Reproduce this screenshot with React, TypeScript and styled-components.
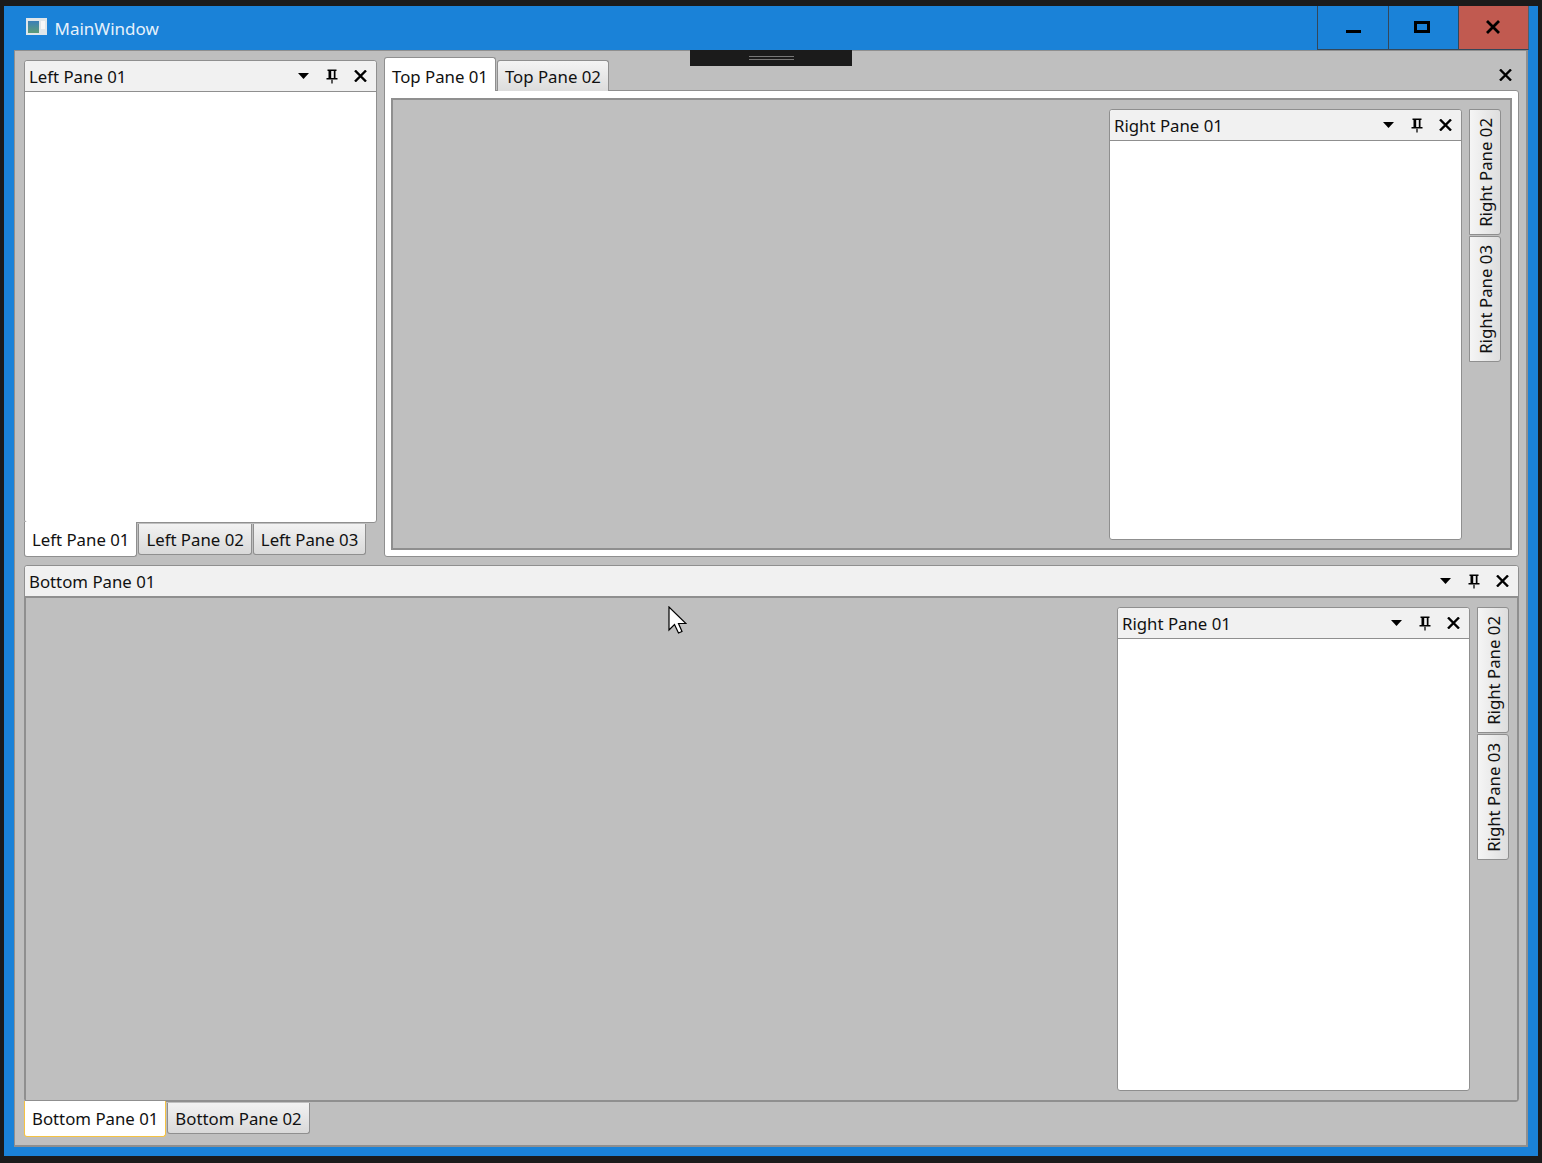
import styled, { createGlobalStyle } from "styled-components";

const line = "#8f8f8f";
const paneGray = "#bfbfbf";

const GlobalStyle = createGlobalStyle`
  html, body {
    margin: 0;
    padding: 0;
    height: 100%;
    background: #1b1b1b;
  }
  * {
    box-sizing: border-box;
  }
`;

const Screen = styled.div`
  position: relative;
  width: 1542px;
  height: 1163px;
  padding: 6px 4px 7px 4px;
  overflow: hidden;
  font-family: "Noto Sans", "Open Sans", sans-serif;
  font-size: 16.8px;
  color: #111;
`;

const Frame = styled.div`
  height: 100%;
  display: flex;
  flex-direction: column;
  background: #1a82d8;
`;

const TitleBar = styled.div`
  height: 44px;
  flex: none;
  display: flex;
  align-items: stretch;
  padding: 0 9.5px 0 22px;
`;

const AppIcon = styled.svg`
  width: 22px;
  height: 18px;
  margin-top: 12px;
`;

const AppTitle = styled.div`
  margin-left: 6.5px;
  margin-top: 10px;
  font-size: 17px;
  line-height: 25px;
  color: #e6f1fb;
`;

const WindowButtons = styled.div`
  margin-left: auto;
  display: flex;
`;

const WindowButton = styled.div<{ $danger?: boolean }>`
  width: 70.5px;
  display: flex;
  align-items: center;
  justify-content: center;
  padding: ${(p) => (p.$danger ? "0 0 2px 0" : "0 3px 6px 0")};
  background: ${(p) => (p.$danger ? "#c15a50" : "#1a82d8")};
  border-left: 1px solid #33475a;
  border-bottom: 1px solid #33475a;
  &:last-child {
    border-right: 1px solid #4d5f6e;
  }
`;

const Content = styled.div`
  flex: 1;
  margin: 0 10px 10px 10px;
  padding: 9px 8px 8px 9px;
  border: 1px solid ${line};
  border-width: 1px 2px 2px 1px;
  background: ${paneGray};
  display: grid;
  grid-template-columns: 353px 1135px;
  grid-template-rows: 497px 572px;
  column-gap: 7px;
  row-gap: 8px;
`;

const Column = styled.div<{ $wide?: boolean }>`
  display: flex;
  flex-direction: column;
  min-height: 0;
  min-width: 0;
  ${(p) => (p.$wide ? "grid-column: 1 / -1;" : "")}
`;

const Panel = styled.div<{ $grow?: boolean }>`
  display: flex;
  flex-direction: column;
  background: #fff;
  border: 1px solid ${line};
  border-radius: 3px;
  flex: ${(p) => (p.$grow ? "1" : "none")};
  min-height: 0;
`;

const PanelHeader = styled.div`
  height: 31px;
  flex: none;
  display: flex;
  align-items: center;
  padding: 0 1px 0 4px;
  background: #f1f1f1;
  border-bottom: 1px solid ${line};
  border-radius: 3px 3px 0 0;
  line-height: 30px;
`;

const HeaderTitle = styled.span`
  flex: 1;
  padding-top: 2px;
  white-space: nowrap;
`;

const IconSlot = styled.span`
  width: 28.5px;
  height: 30px;
  display: flex;
  align-items: center;
  justify-content: center;
`;

const TabStrip = styled.div<{ $bottom?: boolean; $tall?: boolean }>`
  flex: none;
  display: flex;
  align-items: ${(p) => (p.$bottom ? "flex-start" : "flex-end")};
  gap: 1px;
  height: ${(p) => (p.$tall ? "35px" : "34px")};
  position: relative;
  z-index: 1;
  ${(p) => (p.$bottom ? "" : "margin: -3px 0 -1px 0;")}
`;

const Tab = styled.div<{ $active?: boolean; $bottom?: boolean; $focus?: boolean; $tall?: boolean }>`
  padding: ${(p) => (p.$active && !p.$bottom ? "3px 7px 0 7px" : "0 7px")};
  white-space: nowrap;
  display: flex;
  align-items: center;
  border: 1px solid ${(p) => (p.$focus ? "#f5c242" : line)};
  height: ${(p) => (p.$active ? (p.$tall ? "36px" : p.$bottom ? "35px" : "34px") : "31px")};
  margin-top: ${(p) => (p.$bottom ? (p.$active ? "-1px" : "1px") : "0")};
  border-radius: ${(p) => (p.$bottom ? "0 0 3px 3px" : "3px 3px 0 0")};
  ${(p) => (p.$bottom ? "border-top-width: 0;" : "border-bottom-width: 0;")}
  background: ${(p) =>
    p.$active
      ? "#fff"
      : p.$bottom
        ? "linear-gradient(180deg, #f2f2f2 0%, #d9d9d9 100%)"
        : "linear-gradient(180deg, #f4f4f4 0%, #dcdcdc 100%)"};
`;

const TabClose = styled.span`
  position: absolute;
  right: 7px;
  top: 11px;
  width: 14px;
  height: 14px;
  display: flex;
  align-items: center;
  justify-content: center;
`;

const TabBody = styled.div`
  flex: 1;
  min-height: 0;
  display: flex;
  padding: 7px 6px 6px 6px;
  background: #fff;
  border: 1px solid ${line};
  border-radius: 0 3px 3px 3px;
`;

const DocumentArea = styled.div<{ $inset?: boolean }>`
  flex: 1;
  min-height: 0;
  display: flex;
  justify-content: flex-end;
  gap: 7px;
  background: ${paneGray};
  border: ${(p) => (p.$inset ? `2px solid ${line}` : `1px solid ${line}`)};
  padding: ${(p) => (p.$inset ? "9px 9px 8px 0" : "9px 8px 9px 0")};
`;

const DockedPane = styled(Panel)`
  width: 353px;
`;

const SideTabs = styled.div`
  width: 32px;
  display: flex;
  flex-direction: column;
  gap: 1px;
`;

const SideTab = styled.div`
  height: 126px;
  display: flex;
  align-items: center;
  justify-content: center;
  border: 1px solid ${line};
  border-radius: 0 3px 3px 0;
  background: linear-gradient(90deg, #f5f5f5 0%, #dedede 100%);
`;

const SideLabel = styled.span`
  writing-mode: vertical-rl;
  transform: rotate(180deg);
  white-space: nowrap;
`;

const PanelFill = styled.div`
  flex: 1;
`;

const DragGrip = styled.div`
  position: absolute;
  left: 690px;
  top: 50px;
  width: 162px;
  height: 16px;
  background: #1b1b1b;
  display: flex;
  flex-direction: column;
  align-items: center;
  padding-top: 6px;
  gap: 2px;
`;

const GripLine = styled.span`
  width: 45px;
  height: 1px;
  background: #777;
`;

const Cursor = styled.svg`
  position: absolute;
  left: 668px;
  top: 606px;
  width: 19px;
  height: 28px;
`;

function CaretIcon() {
  return (
    <svg width="11" height="6" viewBox="0 0 11 6">
      <path d="M0 0H11L5.5 6Z" fill="#000" />
    </svg>
  );
}

function PinIcon() {
  return (
    <svg width="12" height="15" viewBox="0 0 12 15">
      <path d="M1.5 .5H10.5V2H9.5V9H11.5V10.5H.5V9H2.5V2H1.5ZM5.2 2V9H7.8V2Z" fill="#000" fillRule="evenodd" />
      <path d="M5.2 10.5H6.8V14.5H5.2Z" fill="#333" />
    </svg>
  );
}

function CloseIcon() {
  return (
    <svg width="13" height="12" viewBox="0 0 13 12">
      <path d="M1 .5L12 11.5M12 .5L1 11.5" stroke="#000" strokeWidth="2.4" fill="none" />
    </svg>
  );
}

function PaneHeader({ title }: { title: string }) {
  return (
    <PanelHeader>
      <HeaderTitle>{title}</HeaderTitle>
      <IconSlot>
        <CaretIcon />
      </IconSlot>
      <IconSlot>
        <PinIcon />
      </IconSlot>
      <IconSlot>
        <CloseIcon />
      </IconSlot>
    </PanelHeader>
  );
}

function RightDock({ inset }: { inset?: boolean }) {
  return (
    <DocumentArea $inset={inset}>
      <DockedPane>
        <PaneHeader title="Right Pane 01" />
        <PanelFill />
      </DockedPane>
      <SideTabs>
        <SideTab>
          <SideLabel>Right Pane 02</SideLabel>
        </SideTab>
        <SideTab>
          <SideLabel>Right Pane 03</SideLabel>
        </SideTab>
      </SideTabs>
    </DocumentArea>
  );
}

export default function App() {
  return (
    <Screen>
      <GlobalStyle />
      <Frame>
        <TitleBar>
          <AppIcon viewBox="0 0 22 18">
            <defs>
              <linearGradient id="appIconFill" x1="0" y1="0" x2="0" y2="1">
                <stop offset="0" stopColor="#3a7fb8" />
                <stop offset="1" stopColor="#5c9c78" />
              </linearGradient>
            </defs>
            <rect x="0" y="0" width="21" height="17" fill="#dfe6ea" />
            <rect x="2" y="3" width="11" height="12" fill="url(#appIconFill)" />
            <rect x="15" y="3" width="4" height="8" fill="#f5f7f8" />
          </AppIcon>
          <AppTitle>MainWindow</AppTitle>
          <WindowButtons>
            <WindowButton>
              <svg width="22" height="20" viewBox="0 0 22 20">
                <rect x="6" y="15" width="15" height="3" fill="#000" />
              </svg>
            </WindowButton>
            <WindowButton>
              <svg width="16" height="20" viewBox="0 0 16 20">
                <path d="M0 6H16V18H0ZM3 9V15H13V9Z" fill="#000" fillRule="evenodd" />
              </svg>
            </WindowButton>
            <WindowButton $danger>
              <svg width="14" height="14" viewBox="0 0 14 14">
                <path d="M1 1L13 13M13 1L1 13" stroke="#000" strokeWidth="2.8" fill="none" />
              </svg>
            </WindowButton>
          </WindowButtons>
        </TitleBar>
        <Content>
          <Column>
            <Panel $grow>
              <PaneHeader title="Left Pane 01" />
              <PanelFill />
            </Panel>
            <TabStrip $bottom>
              <Tab $active $bottom>Left Pane 01</Tab>
              <Tab $bottom>Left Pane 02</Tab>
              <Tab $bottom>Left Pane 03</Tab>
            </TabStrip>
          </Column>
          <Column>
            <TabStrip>
              <Tab $active>Top Pane 01</Tab>
              <Tab>Top Pane 02</Tab>
              <TabClose>
                <CloseIcon />
              </TabClose>
            </TabStrip>
            <TabBody>
              <RightDock inset />
            </TabBody>
          </Column>
          <Column $wide>
            <Panel $grow>
              <PaneHeader title="Bottom Pane 01" />
              <RightDock />
            </Panel>
            <TabStrip $bottom $tall>
              <Tab $active $bottom $focus $tall>Bottom Pane 01</Tab>
              <Tab $bottom>Bottom Pane 02</Tab>
            </TabStrip>
          </Column>
        </Content>
      </Frame>
      <DragGrip>
        <GripLine />
        <GripLine />
      </DragGrip>
      <Cursor viewBox="0 0 19 28">
        <path d="M1 1V24L6.5 18.5L10.5 27L14 25.5L10.5 17.5H18Z" fill="#fff" stroke="#000" strokeWidth="1.2" strokeLinejoin="miter" />
      </Cursor>
    </Screen>
  );
}
